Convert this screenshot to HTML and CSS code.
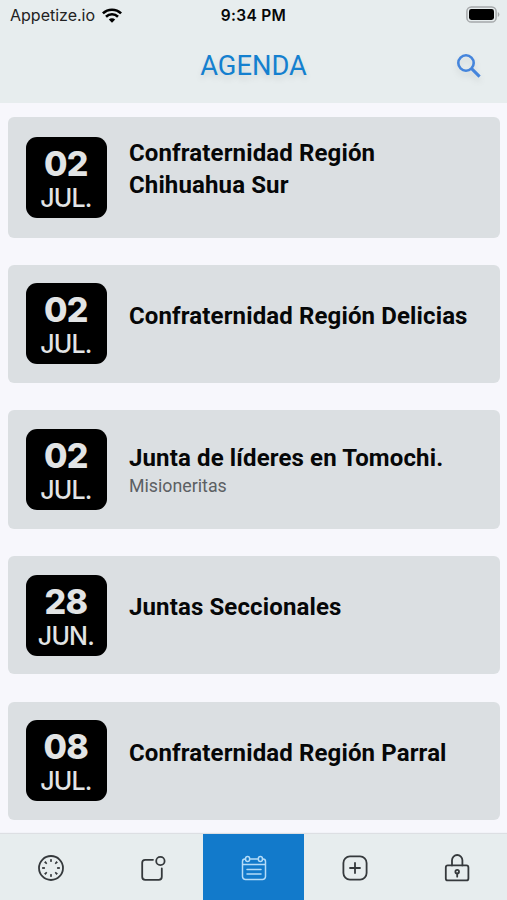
FILE: index.html
```html
<!DOCTYPE html>
<html lang="es">
<head>
<meta charset="utf-8">
<meta name="viewport" content="width=device-width, initial-scale=1">
<title>Agenda</title>
<link rel="stylesheet" href="styles.css">
</head>
<body>
<div class="app">
    <header>
        <div class="status">
            <div class="carrier">
                <span>Appetize.io</span>
                <svg class="wifi" width="20" height="15" viewBox="0 0 20 15" fill="none" stroke="#000" stroke-width="2.6">
                    <path d="M.9 5.4a13 13 0 0 1 18.2 0M4 8.7a8.6 8.6 0 0 1 12 0"/>
                    <path d="M6.8 11.6a4.6 4.6 0 0 1 6.4 0L10 14.8z" fill="#000" stroke="none"/>
                </svg>
            </div>
            <div class="time">9:34 PM</div>
            <svg class="battery" width="34" height="17" viewBox="0 0 34 17">
                <rect x=".9" y=".9" width="29.2" height="15.2" rx="4.4" fill="none" stroke="#a5a8aa" stroke-width="1.5"/>
                <rect x="3" y="3" width="25" height="11" rx="2.4"/>
                <path d="M31.8 6v5q1.6-.7 1.6-2.5T31.8 6z" fill="#a5a8aa"/>
            </svg>
        </div>
        <div class="bar">
            <h1>AGENDA</h1>
            <svg class="search" width="26" height="26" viewBox="0 0 26 26" fill="none" stroke="#4585dc" stroke-width="2.6">
                <circle cx="10" cy="10" r="7.7"/>
                <path d="M15.6 15.6l8 8" stroke-width="3.1"/>
            </svg>
        </div>
    </header>

    <main>
        <article class="card tall">
            <div class="date"><b>02</b><span>JUL.</span></div>
            <div class="info"><h2>Confraternidad Región<br>Chihuahua Sur</h2><p></p></div>
        </article>
        <article class="card">
            <div class="date"><b>02</b><span>JUL.</span></div>
            <div class="info"><h2>Confraternidad Región Delicias</h2><p></p></div>
        </article>
        <article class="card">
            <div class="date"><b>02</b><span>JUL.</span></div>
            <div class="info"><h2>Junta de líderes en Tomochi.</h2><p>Misioneritas</p></div>
        </article>
        <article class="card">
            <div class="date"><b>28</b><span>JUN.</span></div>
            <div class="info"><h2>Juntas Seccionales</h2><p></p></div>
        </article>
        <article class="card">
            <div class="date"><b>08</b><span>JUL.</span></div>
            <div class="info"><h2>Confraternidad Región Parral</h2><p></p></div>
        </article>
    </main>

    <nav>
        <a class="tab">
            <svg viewBox="0 0 30 30">
                <circle cx="15" cy="15" r="12"/>
                <circle class="ticks" cx="15" cy="15" r="7.4" pathLength="80"/>
            </svg>
        </a>
        <a class="tab">
            <svg viewBox="0 0 30 30">
                <path d="M15 6.8H7.200a3 3 0 0 0-3 3v14a3 3 0 0 0 3 3h13.600a3 3 0 0 0 3-3V15.400"/>
                <circle cx="22.400" cy="8" r="4.200"/>
            </svg>
        </a>
        <a class="tab active">
            <svg viewBox="0 0 30 30">
                <path d="M6 6a2.500 2.500 0 0 0-2.500 2.500V23.500a3 3 0 0 0 3 3h17a3 3 0 0 0 3-3V8.500a2.500 2.500 0 0 0-2.500-2.500M10.800 6h8.400M3.500 11.600h23M8 16.600h14M8 21h14"/>
                <rect x="6.600" y="3.400" width="4" height="5.200" rx="2"/>
                <rect x="19.400" y="3.400" width="4" height="5.200" rx="2"/>
            </svg>
        </a>
        <a class="tab">
            <svg viewBox="0 0 30 30">
                <rect x="3.400" y="3.400" width="23.200" height="23.200" rx="6.500"/>
                <path d="M15 10v10M10 15h10"/>
            </svg>
        </a>
        <a class="tab">
            <svg viewBox="0 0 30 30">
                <rect x="3.800" y="12.400" width="22.600" height="15" rx="2"/>
                <path d="M10 12.400V7.200a5.200 5.200 0 0 1 10.400 0v5.200M15.200 20.500v3.200"/>
                <circle cx="15.200" cy="18.700" r="1.800"/>
            </svg>
        </a>
    </nav>
</div>
</body>
</html>
```
FILE: styles.css
```css
* {box-sizing: border-box;}
body {
    margin: 0;
    background: #f7f7fc;
    font-family: Roboto, "Liberation Sans", sans-serif;
    color: #060708;
}
h1, h2, p {margin: 0; font-weight: normal;}
svg {display: block;}
.app {
    display: flex;
    flex-direction: column;
    height: 900px;
    overflow: hidden;
}

header {
    height: 103px;
    background: #e7edee;
}
.status {
    display: grid;
    grid-template-columns: 1fr auto 1fr;
    align-items: center;
    height: 30px;
    padding: 0 7px 0 10px;
    font-family: Inter, sans-serif;
    font-size: 15.500px;
}
.carrier {display: flex; align-items: center; gap: 7px;}
.carrier span {font-size: 16px; color: #222;}
.time {font-weight: 600; letter-spacing: 0.3px; margin-right: 3px;}
.battery {justify-self: end; margin-bottom: 2px;}
.bar {
    display: grid;
    grid-template-columns: 1fr auto 1fr;
    align-items: center;
    height: 71px;
    padding: 0 25px;
}
h1 {
    grid-column: 2;
    font-size: 27.300px;
    color: #1480cf;
    text-shadow: 0 4px 6px rgba(0,0,0,0.1);
}
.search {
    justify-self: end;
    filter: drop-shadow(0 4px 3px rgba(0,0,0,0.1));
}

main {
    flex: 1;
    display: flex;
    flex-direction: column;
    gap: 27.300px;
    padding: 14px 7px 0 8px;
}
.card {
    display: flex;
    align-items: center;
    flex: none;
    height: 118.300px;
    padding-left: 18.400px;
    background: #dbdfe2;
    border-radius: 6px;
}
.card.tall {height: 120.500px;}
.date {
    display: flex;
    flex-direction: column;
    align-items: center;
    width: 81px;
    height: 81px;
    padding-top: 9px;
    background: #000;
    border-radius: 11px;
    color: #e2e4e5;
    font-family: Inter, sans-serif;
}
.date b {font-size: 34px; line-height: 36px; font-weight: 800; letter-spacing: -0.7px; margin-right: 2px;}
.date span {font-size: 25px; line-height: 32px; font-weight: 500; letter-spacing: -0.8px; margin-right: 2px;}
.info {margin-left: 21.600px;}
h2 {
    font-size: 24px;
    line-height: 32px;
    font-weight: 700;
    letter-spacing: 0.13px;
    white-space: nowrap;
}
.info p {
    min-height: 16px;
    font-size: 17.800px;
    line-height: 23px;
    color: #5c6063;
}

nav {
    display: grid;
    grid-template-columns: repeat(5, 1fr);
    height: 66px;
    background: #e7edee;
    box-shadow: 0 -1px 1px #dddfe3;
}
.tab {
    display: flex;
    align-items: center;
    justify-content: center;
    padding: 2px 0 0 1px;
}
.tab svg {
    width: 30px;
    height: 30px;
    fill: none;
    stroke: #35393c;
    stroke-width: 1.800;
    stroke-linecap: round;
}
.tab .ticks {
    stroke-width: 2.800;
    stroke-linecap: butt;
    stroke-dasharray: 3 7;
    stroke-dashoffset: 1.500;
}
.tab.active {background: #127acb;}
.tab.active svg {stroke: #b4dcf8; stroke-width: 1.500;}
```
